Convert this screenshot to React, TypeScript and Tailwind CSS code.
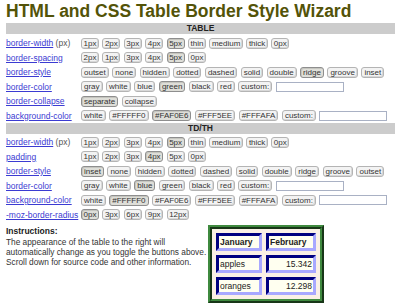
import React from "react";

type Row = {
  label: string;
  px?: boolean;
  opts: string[];
  sel: number;
  custom?: boolean;
  tight?: boolean;
};

const tableRows: Row[] = [
  { label: "border-width", px: true, opts: ["1px", "2px", "3px", "4px", "5px", "thin", "medium", "thick", "0px"], sel: 4, tight: true },
  { label: "border-spacing", opts: ["2px", "1px", "3px", "4px", "5px", "0px"], sel: 4, tight: true },
  { label: "border-style", opts: ["outset", "none", "hidden", "dotted", "dashed", "solid", "double", "ridge", "groove", "inset"], sel: 7 },
  { label: "border-color", opts: ["gray", "white", "blue", "green", "black", "red", "custom:"], sel: 3, custom: true },
  { label: "border-collapse", opts: ["separate", "collapse"], sel: 0 },
  { label: "background-color", opts: ["white", "#FFFFF0", "#FAF0E6", "#FFF5EE", "#FFFAFA", "custom:"], sel: 2, custom: true },
];

const cellRows: Row[] = [
  { label: "border-width", px: true, opts: ["1px", "2px", "3px", "4px", "5px", "thin", "medium", "thick", "0px"], sel: 4, tight: true },
  { label: "padding", opts: ["1px", "2px", "3px", "4px", "5px", "0px"], sel: 3, tight: true },
  { label: "border-style", opts: ["inset", "none", "hidden", "dotted", "dashed", "solid", "double", "ridge", "groove", "outset"], sel: 0 },
  { label: "border-color", opts: ["gray", "white", "blue", "green", "black", "red", "custom:"], sel: 2, custom: true },
  { label: "background-color", opts: ["white", "#FFFFF0", "#FAF0E6", "#FFF5EE", "#FFFAFA", "custom:"], sel: 1, custom: true },
  { label: "-moz-border-radius", opts: ["0px", "3px", "6px", "9px", "12px"], sel: 0, tight: true },
];

function Bar({ title }: { title: string }) {
  return (
    <div className="h-[11px] bg-[#cccccc] text-center text-[8.5px] font-bold leading-[11px] text-[#222]">
      {title}
    </div>
  );
}

function OptionRow({ row }: { row: Row }) {
  const pad = row.tight ? "px-[1.5px] " : "px-[2px] ";
  return (
    <div className="flex h-[14.5px] items-center">
      <div className="w-[75px] shrink-0 whitespace-nowrap text-[8.5px] leading-none">
        <span className="text-[#3b3bd2] underline">{row.label}</span>
        {row.px && <span className="text-[#555]"> (px)</span>}
      </div>
      <div className="flex items-center gap-[3.5px]">
        {row.opts.map((o, i) => (
          <span
            key={o + i}
            className={
              pad +
              (i === row.sel
                ? "h-[11px] shrink-0 whitespace-nowrap rounded-[3px] border border-[#8e8e8e] bg-[#deded8] text-center text-[8px] leading-[9px] text-[#333] shadow-[inset_1px_1px_0_#c6c6c0]"
                : "h-[11px] shrink-0 whitespace-nowrap rounded-[3px] border border-[#b4b4b4] bg-[#f3f3f3] text-center text-[8px] leading-[9px] text-[#333] shadow-[inset_-1px_-1px_0_#d8d8d8]")
            }
          >
            {o}
          </span>
        ))}
        {row.custom && (
          <span className="h-[10px] w-[68px] shrink-0 border border-[#a9b1c4] bg-white" />
        )}
      </div>
    </div>
  );
}

function Cell({ children, head, right }: { children: React.ReactNode; head?: boolean; right?: boolean }) {
  return (
    <td
      className={
        "h-[18px] border-[3px] border-t-[#000080] border-l-[#000080] border-b-[#a8a8ff] border-r-[#a8a8ff] bg-[#FFFFF0] px-[1px] text-[8.5px] leading-none text-[#222] " +
        (head ? "font-bold " : "") +
        (right ? "text-right" : "text-left")
      }
    >
      {children}
    </td>
  );
}

export default function App() {
  return (
    <div className="h-[305px] w-[400px] overflow-hidden bg-white pl-[6px] pr-[5px] [font-family:'Liberation_Sans',Arial,sans-serif]">
      <h1 className="h-[22px] whitespace-nowrap text-[17.5px] font-bold leading-[22px] text-[#535308]">
        HTML and CSS Table Border Style Wizard
      </h1>
      <div className="mt-[1px]">
        <Bar title="TABLE" />
      </div>
      <div className="mt-[2px]">
        {tableRows.map((r) => (
          <OptionRow key={r.label} row={r} />
        ))}
      </div>
      <Bar title="TD/TH" />
      <div className="mt-[1px]">
        {cellRows.map((r) => (
          <OptionRow key={"c" + r.label} row={r} />
        ))}
      </div>
      <div className="mt-[1px] flex">
        <div className="mt-[3px] w-[202px] shrink-0 whitespace-nowrap">
          <p className="text-[8.5px] font-bold leading-[11px] text-[#222]">Instructions:</p>
          <p className="text-[8.3px] leading-[10px] text-[#333]">
            The appearance of the table to the right will
            <br />
            automatically change as you toggle the buttons above.
            <br />
            Scroll down for source code and other information.
          </p>
        </div>
        <div className="mt-[2px] border-[4px] border-[#3f8a3f] bg-[#FAF0E6] [border-style:ridge]">
          <table className="border-separate border-spacing-[4px]">
            <tbody>
              <tr>
                <Cell head>
                  <div className="w-[38px]">January</div>
                </Cell>
                <Cell head>
                  <div className="w-[42px]">February</div>
                </Cell>
              </tr>
              <tr>
                <Cell>apples</Cell>
                <Cell right>15.342</Cell>
              </tr>
              <tr>
                <Cell>oranges</Cell>
                <Cell right>12.298</Cell>
              </tr>
            </tbody>
          </table>
        </div>
      </div>
    </div>
  );
}
